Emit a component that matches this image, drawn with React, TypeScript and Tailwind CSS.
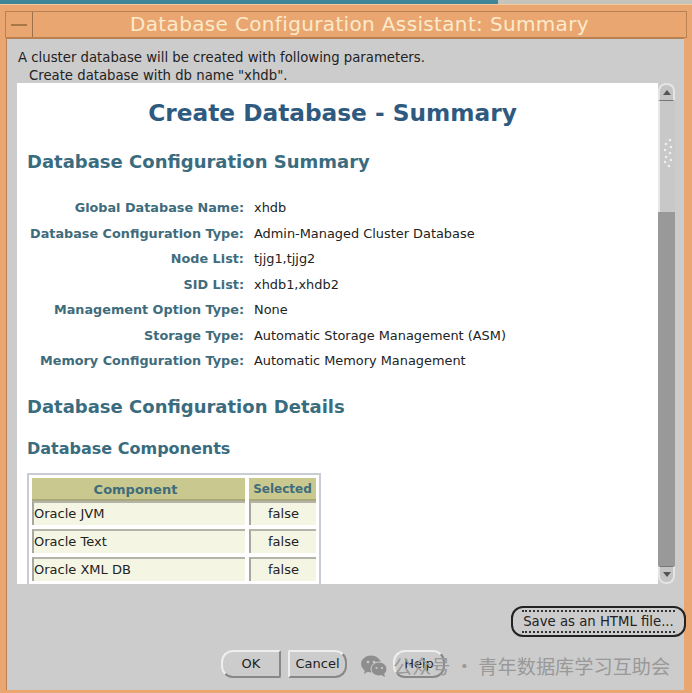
import React from "react";

const font = "font-['DejaVu_Sans',sans-serif]";

const params = [
  ["Global Database Name:", "xhdb"],
  ["Database Configuration Type:", "Admin-Managed Cluster Database"],
  ["Node List:", "tjjg1,tjjg2"],
  ["SID List:", "xhdb1,xhdb2"],
  ["Management Option Type:", "None"],
  ["Storage Type:", "Automatic Storage Management (ASM)"],
  ["Memory Configuration Type:", "Automatic Memory Management"],
];

const rows = ["Oracle JVM", "Oracle Text", "Oracle XML DB"];

const Grip = () => (
  <svg width="14" height="34" viewBox="0 0 14 34" className="mt-[37px] ml-[1px]">
    {[
      [9, 2], [5, 6], [10, 9], [4, 12], [9, 15], [5, 19], [10, 22], [4, 24], [8, 28],
    ].map(([x, y], i) => (
      <circle key={i} cx={x} cy={y} r="1.3" fill="#eeeeee" />
    ))}
  </svg>
);

const Scrollbar = () => (
  <div className="w-[17px] shrink-0 flex flex-col bg-[#cccccc]">
    <div className="h-[18px] rounded-t-[8px] border-2 border-b border-[#e4e4e4] border-b-[#777777] bg-[#c4c4c4] flex items-center justify-center">
      <div className="w-0 h-0 border-x-[4px] border-x-transparent border-b-[5px] border-b-[#555555]" />
    </div>
    <div className="h-[111px] bg-[#c8c8c8] border-l-2 border-[#e8e8e8]">
      <Grip />
    </div>
    <div className="flex-1 bg-[#999999]" />
    <div className="h-[18px] rounded-b-[8px] border-2 border-t border-[#e4e4e4] border-t-[#777777] bg-[#c4c4c4] flex items-center justify-center">
      <div className="w-0 h-0 border-x-[4px] border-x-transparent border-t-[5px] border-t-[#555555]" />
    </div>
  </div>
);

const Cell = ({ children, className }: { children: React.ReactNode; className: string }) => (
  <div className={`h-[24px] bg-[#f5f5e4] border-t-2 border-l-2 border-t-[#b4b4a8] border-l-[#a8a8a0] text-[13px] leading-[22px] text-[#222222] ${className}`}>
    {children}
  </div>
);

export default function App() {
  return (
    <div className={`${font} w-[692px] h-[693px] overflow-hidden bg-[#cccccc] flex flex-col`}>
      <div className="h-[4px] flex shrink-0">
        <div className="w-[498px] bg-[#3f8798]" />
        <div className="flex-1 bg-[#c4c4bc]" />
      </div>
      <div className="flex-1 flex flex-col bg-[#eaa670] px-[6px] pb-[3px] pt-[6px] border-t border-[#f3c9a0]">
        {/* title bar */}
        <div className="h-[27px] shrink-0 flex items-stretch border border-[#b98052] -mx-[1px]">
          <div className="w-[27px] shrink-0 border-r border-[#9c7048] flex items-center justify-center">
            <div className="w-[16px] h-[2px] bg-[#a87848]" />
          </div>
          <div className="flex-1 text-center text-[20px] leading-[25px] text-[#fbeacb] tracking-[0.35px] whitespace-nowrap">
            Database Configuration Assistant: Summary
          </div>
        </div>
        {/* window body */}
        <div className="flex-1 mr-[2px] flex flex-col bg-[#cccccc] pl-[10px] pr-[9px] pt-[10px] border-t border-l border-[#b98052]">
          <div className="text-[13.25px] leading-[18px] text-[#222222] h-[34px] shrink-0">
            <p className="pl-[1px]">A cluster database will be created with following parameters.</p>
            <p className="pl-[12px]">Create database with db name "xhdb".</p>
          </div>
          <div className="h-[501px] shrink-0 flex">
            <div className="flex-1 bg-white overflow-hidden pl-[10px]">
              <h1 className="text-[23.25px] leading-[32px] font-bold text-[#2f5a80] text-center mt-[14px] pr-[20px]">
                Create Database - Summary
              </h1>
              <h2 className="text-[18px] leading-[24px] font-bold text-[#3a6c80] mt-[21px]">
                Database Configuration Summary
              </h2>
              <div className="mt-[21px] flex flex-col">
                {params.map(([k, v]) => (
                  <div key={k} className="flex h-[25.5px] items-center text-[12.9px]">
                    <div className="w-[217px] text-right font-bold text-[#3f6c7c] text-[12.8px] whitespace-nowrap">{k}</div>
                    <div className="ml-[10px] text-[#222222] whitespace-nowrap">{v}</div>
                  </div>
                ))}
              </div>
              <h2 className="text-[18px] leading-[24px] font-bold text-[#3a6c80] mt-[21px]">
                Database Configuration Details
              </h2>
              <h3 className="text-[16px] leading-[22px] font-bold text-[#3a6c80] mt-[19px]">Database Components</h3>
              <div className="mt-[13px] w-[294px] border-2 border-b-0 border-[#c8ccd4] pl-[3px] pt-[3px] pr-[3px] h-[112px] overflow-hidden">
                <div className="flex h-[23px] gap-[4px]">
                  <div className="w-[213px] bg-[#c9c88f] border-b-2 border-[#a8a878] text-center text-[13px] leading-[23px] font-bold text-[#3f6c7c] pr-[6px]">
                    Component
                  </div>
                  <div className="flex-1 bg-[#c9c88f] border-b-2 border-[#a8a878] text-center text-[12px] leading-[23px] font-bold text-[#3f6c7c] whitespace-nowrap">
                    Selected
                  </div>
                </div>
                {rows.map((r) => (
                  <div key={r} className="flex gap-[4px] mb-[4px]">
                    <Cell className="w-[213px] whitespace-nowrap">{r}</Cell>
                    <Cell className="flex-1 text-center">false</Cell>
                  </div>
                ))}
              </div>
            </div>
            <Scrollbar />
          </div>
          {/* buttons */}
          <div className="flex justify-end mt-[22px] -mr-[11px]">
            <button className="w-[175px] h-[31px] rounded-[12px] border-2 border-[#222222] text-[13.25px] text-[#222222] flex items-center justify-center">
              <span className="border-y-2 border-dotted border-[#333333] px-[1px] leading-[19px] whitespace-nowrap">Save as an HTML file...</span>
            </button>
          </div>
          <div className="relative flex mt-[13px] pl-[204px] gap-[7px] text-[13px] text-[#222222]">
            <button className="w-[60px] h-[28px] rounded-l-[12px] rounded-r-[2px] border-2 border-[#eeeeee] border-r-[#888888] border-b-[#888888]">OK</button>
            <button className="w-[59px] h-[28px] rounded-r-[12px] rounded-l-[2px] border-2 border-[#eeeeee] border-r-[#888888] border-b-[#888888]">Cancel</button>
            <button className="ml-[39px] w-[52px] h-[28px] rounded-[12px] border-2 border-[#eeeeee] border-r-[#888888] border-b-[#888888]">Help</button>
            {/* watermark */}
            <div className="absolute left-[344px] top-[2px] h-[28px] flex items-center gap-[6px] text-[19.2px] text-[#999999] whitespace-nowrap font-['Noto_Sans_CJK_SC',sans-serif]">
              <svg width="26" height="22" viewBox="0 0 26 22" className="shrink-0">
                <ellipse cx="10" cy="9" rx="10" ry="8.5" fill="#8e8e8e" />
                <path d="M4 14l-1 5 5-3z" fill="#8e8e8e" />
                <ellipse cx="18" cy="14" rx="8" ry="7" fill="#8e8e8e" stroke="#cccccc" strokeWidth="1" />
                <path d="M23 18l1 4-4-2z" fill="#8e8e8e" />
                <circle cx="7" cy="7" r="1.3" fill="#cccccc" />
                <circle cx="13" cy="7" r="1.3" fill="#cccccc" />
                <circle cx="15.5" cy="13" r="1.1" fill="#cccccc" />
                <circle cx="21" cy="13" r="1.1" fill="#cccccc" />
              </svg>
              <span>公众号 · 青年数据库学习互助会</span>
            </div>
          </div>
        </div>
      </div>
    </div>
  );
}
